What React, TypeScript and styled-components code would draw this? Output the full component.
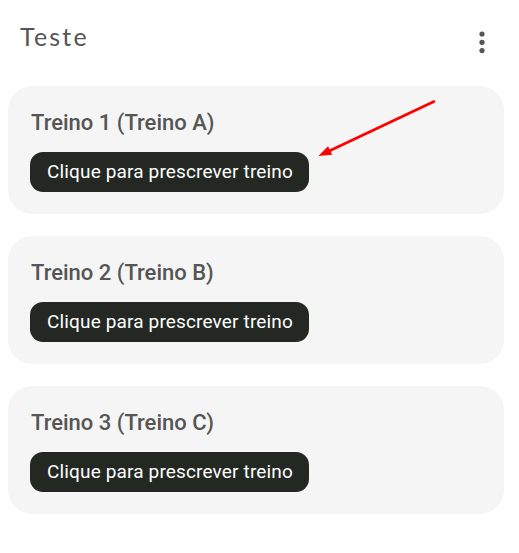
import React from 'react'
import styled, { createGlobalStyle } from 'styled-components'

const GlobalStyle = createGlobalStyle`
  html, body {
    margin: 0;
    padding: 0;
    background: #ffffff;
  }
  body {
    font-family: Roboto, "Liberation Sans", sans-serif;
  }
`

const Page = styled.div`
  position: relative;
  width: 519px;
  min-height: 553px;
  background: #ffffff;
`

const Header = styled.header`
  display: flex;
  justify-content: space-between;
  align-items: flex-start;
  height: 86px;
  padding: 21px 25px 0 20px;
  box-sizing: border-box;
`

const PageTitle = styled.h1`
  margin: 0;
  font-family: Lato, "Noto Sans", sans-serif;
  font-weight: 400;
  font-size: 25px;
  line-height: 30px;
  color: #555555;
  letter-spacing: 2.2px;
`

const MenuButton = styled.button`
  display: flex;
  border: 0;
  padding: 0;
  margin-top: 9px;
  background: transparent;
  cursor: pointer;
`

const CardList = styled.div`
  display: flex;
  flex-direction: column;
  gap: 22px;
  margin: 0 15px 0 8px;
`

const Card = styled.section`
  display: flex;
  flex-direction: column;
  align-items: flex-start;
  gap: 16px;
  height: 128px;
  padding: 24px 22px 0;
  box-sizing: border-box;
  background: #f5f5f5;
  border-radius: 24px;
`

const CardTitle = styled.h2`
  margin: 0 0 0 1px;
  font-weight: 500;
  font-size: 22px;
  line-height: 26px;
  color: #555555;
`

const PrescribeButton = styled.button`
  height: 40px;
  padding: 0 16px 0 17px;
  border: 0;
  border-radius: 13px;
  background: #242823;
  color: #ffffff;
  font-family: Roboto, "Liberation Sans", sans-serif;
  font-size: 19px;
  letter-spacing: 0.15px;
  line-height: 40px;
  cursor: pointer;
`

const Annotation = styled.svg`
  position: absolute;
  left: 0;
  top: 0;
  pointer-events: none;
`

const workouts = [
  { id: 1, name: 'Treino 1 (Treino A)' },
  { id: 2, name: 'Treino 2 (Treino B)' },
  { id: 3, name: 'Treino 3 (Treino C)' },
]

function MoreIcon() {
  return (
    <svg width="24" height="24" viewBox="0 0 24 24">
      <circle cx="12" cy="4" r="2.6" fill="#555555" />
      <circle cx="12" cy="12.3" r="2.6" fill="#555555" />
      <circle cx="12" cy="20.6" r="2.6" fill="#555555" />
    </svg>
  )
}

export default function App() {
  return (
    <Page>
      <GlobalStyle />
      <Header>
        <PageTitle>Teste</PageTitle>
        <MenuButton aria-label="Mais opções">
          <MoreIcon />
        </MenuButton>
      </Header>
      <CardList>
        {workouts.map((workout) => (
          <Card key={workout.id}>
            <CardTitle>{workout.name}</CardTitle>
            <PrescribeButton>Clique para prescrever treino</PrescribeButton>
          </Card>
        ))}
      </CardList>
      <Annotation width="519" height="553" viewBox="0 0 519 553">
        <line x1="434" y1="101.5" x2="326" y2="152.5" stroke="#ff0000" strokeWidth="2.6" strokeLinecap="round" />
        <polygon points="318.3,156 332.2,154.8 328.1,146.2" fill="#ff0000" />
      </Annotation>
    </Page>
  )
}
